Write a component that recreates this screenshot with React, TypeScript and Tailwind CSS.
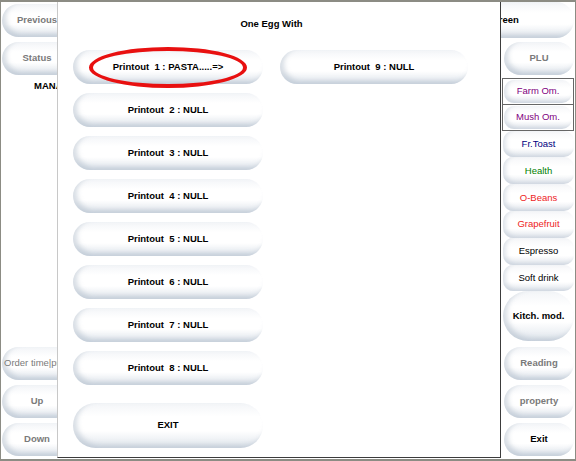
import React from "react";

const pill =
  "flex items-center justify-center rounded-full bg-[linear-gradient(180deg,#f3f5f8_0%,#ffffff_30%,#ffffff_62%,#dfe5ec_100%)] shadow-[inset_4px_-3px_5px_rgba(150,165,185,0.38)] whitespace-pre";

const tile =
  "flex items-center justify-center rounded-[10px] bg-[linear-gradient(180deg,#f6f7f9_0%,#ffffff_35%,#ffffff_65%,#e4e8ee_100%)] shadow-[inset_3px_-2px_4px_rgba(150,165,185,0.3)]";

function SidePill({ label, className }: { label: string; className?: string }) {
  return <div className={`${pill} h-[33px] w-[70px] shrink-0 ${className ?? ""}`}>{label}</div>;
}

function Tile({ label, color, boxed }: { label: string; color: string; boxed?: boolean }) {
  if (boxed) {
    return (
      <div className="h-[27px] w-[72px] border border-[#666] p-px -mt-px first:mt-0">
        <div className={`${tile} h-full ${color}`}>{label}</div>
      </div>
    );
  }
  return <div className={`${tile} h-[27px] w-[71px] ${color}`}>{label}</div>;
}

const printouts = [
  "Printout  1 : PASTA.....=>",
  "Printout  2 : NULL",
  "Printout  3 : NULL",
  "Printout  4 : NULL",
  "Printout  5 : NULL",
  "Printout  6 : NULL",
  "Printout  7 : NULL",
  "Printout  8 : NULL",
];

export default function App() {
  return (
    <div className="relative flex h-[461px] w-[576px] justify-between overflow-hidden border-t-2 border-b-2 border-l border-r border-[#8c8c84] bg-white font-['Liberation_Sans',Arial,sans-serif] text-[9.5px]">
      {/* left column */}
      <div className="flex w-[80px] flex-col pl-px pt-[2px] pb-[3px] font-bold text-[#7a7a7a]">
        <SidePill label="Previous" />
        <SidePill label="Status" className="mt-[5px]" />
        <div className="mt-[5px] pl-[32px] leading-[12px] text-black">MANAGER</div>
        <div className="flex-1" />
        <div className={`${pill} h-[33px] w-[110px] justify-start pl-[2px] font-normal`}>Order time|price</div>
        <SidePill label="Up" className="mt-[5px]" />
        <SidePill label="Down" className="mt-[5px]" />
      </div>

      {/* right column */}
      <div className="flex w-[146px] flex-col items-end pr-px pb-[3px]">
        <div className={`${pill} h-[36px] w-[142px] font-bold text-black`}>Screen</div>
        <SidePill label="PLU" className="mt-[4px] font-bold text-[#7a7a7a]" />
        <div className="mt-[3px] flex flex-col">
          <Tile label="Farm Om." color="text-[#800080]" boxed />
          <Tile label="Mush Om." color="text-[#800080]" boxed />
        </div>
        <Tile label="Fr.Toast" color="text-[#000080]" />
        <Tile label="Health" color="text-[#008000]" />
        <Tile label="O-Beans" color="text-[#ee1c24]" />
        <Tile label="Grapefruit" color="text-[#ee1c24]" />
        <Tile label="Espresso" color="text-black" />
        <Tile label="Soft drink" color="text-black" />
        <div className={`${pill} h-[50px] w-[71px] font-bold text-black`}>Kitch. mod.</div>
        <SidePill label="Reading" className="mt-[6px] font-bold text-[#7a7a7a]" />
        <SidePill label="property" className="mt-[5px] font-bold text-[#7a7a7a]" />
        <SidePill label="Exit" className="mt-[5px] font-bold text-black" />
      </div>

      {/* modal */}
      <div className="absolute left-[56px] top-0 flex h-[456px] w-[444px] flex-col border-l border-r border-b border-l-[#c8c8c8] border-r-[#3c3c3c] border-b-[#3c3c3c] bg-white pt-[16px] pl-[15px] font-bold text-black">
        <div className="pr-[30px] text-center leading-[12px]">One Egg With</div>
        <div className="mt-[20px] flex gap-[17px]">
          <div className="flex w-[190px] flex-col gap-[9px]">
            {printouts.map((p, i) => (
              <div key={p} className={`${pill} relative h-[34px]`}>
                {p}
                {i === 0 && (
                  <div className="absolute left-[16px] top-[-3px] h-[41px] w-[158px] rounded-[50%] border-4 border-[#e81010]" />
                )}
              </div>
            ))}
            <div className={`${pill} mt-[9px] h-[45px]`}>EXIT</div>
          </div>
          <div className="w-[188px]">
            <div className={`${pill} h-[34px]`}>Printout  9 : NULL</div>
          </div>
        </div>
      </div>
    </div>
  );
}
